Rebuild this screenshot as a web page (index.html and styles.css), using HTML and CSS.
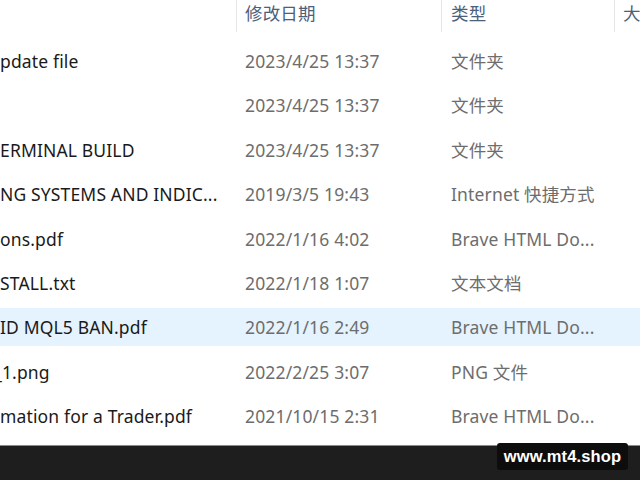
FILE: index.html
```html
<!DOCTYPE html>
<html lang="zh-CN">
<head>
  <meta charset="UTF-8" />
  <meta name="viewport" content="width=device-width, initial-scale=1" />
  <title>文件列表</title>
  <link rel="stylesheet" href="styles.css">
</head>
<body>

<div class="window">
  <!-- Column headers -->
  <div class="header">
    <div class="col name"></div>
    <div class="col date">修改日期</div>
    <div class="col type">类型</div>
    <div class="col size">大</div>
  </div>

  <!-- File rows -->
  <div class="rows">
    <div class="row">
      <div class="cell name">pdate file</div>
      <div class="cell date">2023/4/25 13:37</div>
      <div class="cell type">文件夹</div>
    </div>
    <div class="row">
      <div class="cell name"></div>
      <div class="cell date">2023/4/25 13:37</div>
      <div class="cell type">文件夹</div>
    </div>
    <div class="row">
      <div class="cell name">ERMINAL BUILD</div>
      <div class="cell date">2023/4/25 13:37</div>
      <div class="cell type">文件夹</div>
    </div>
    <div class="row">
      <div class="cell name">NG SYSTEMS AND INDIC...</div>
      <div class="cell date">2019/3/5 19:43</div>
      <div class="cell type">Internet 快捷方式</div>
    </div>
    <div class="row">
      <div class="cell name">ons.pdf</div>
      <div class="cell date">2022/1/16 4:02</div>
      <div class="cell type">Brave HTML Do...</div>
    </div>
    <div class="row">
      <div class="cell name">STALL.txt</div>
      <div class="cell date">2022/1/18 1:07</div>
      <div class="cell type">文本文档</div>
    </div>
    <div class="row hover">
      <div class="cell name">ID MQL5 BAN.pdf</div>
      <div class="cell date">2022/1/16 2:49</div>
      <div class="cell type">Brave HTML Do...</div>
    </div>
    <div class="row">
      <div class="cell name clipped">_1.png</div>
      <div class="cell date">2022/2/25 3:07</div>
      <div class="cell type">PNG 文件</div>
    </div>
    <div class="row">
      <div class="cell name">mation for a Trader.pdf</div>
      <div class="cell date">2021/10/15 2:31</div>
      <div class="cell type">Brave HTML Do...</div>
    </div>
  </div>
</div>

<div class="taskbar"></div>

<!-- Site badge over the taskbar -->
<div class="badge">www.mt4.shop</div>

</body>
</html>
```

FILE: styles.css
```css
html, body {
  margin: 0;
  height: 100%;
}
body {
  display: flex;
  flex-direction: column;
  font-family: "Noto Sans", "Noto Sans CJK SC", sans-serif;
  font-size: 17.5px;
  letter-spacing: 0.15px;
  background: #ffffff;
  color: #1a1a1a;
  overflow: hidden;
}
.window {
  flex: 1;
  background: #ffffff;
  overflow: hidden;
}
.header, .row {
  display: grid;
  grid-template-columns: 236px 205px 173px 1fr;
}
.header {
  height: 32px;
  line-height: 27px;
  color: #4c607a;
}
.header .col {
  white-space: nowrap;
  overflow: hidden;
}
.header .date, .header .type, .header .size {
  border-left: 1px solid #e5e5e5;
}
.header .date { padding-left: 8px; }
.header .type { padding-left: 9px; }
.header .size { padding-left: 8px; }

.rows {
  margin-top: 10px;
  display: flex;
  flex-direction: column;
  gap: 6.375px;
}
.row {
  height: 38px;
  line-height: 38px;
}
.row.hover {
  background: #e5f3ff;
}
.cell {
  white-space: nowrap;
  overflow: hidden;
}
.cell.name {
  color: #1a1a1a;
}
.cell.name.clipped {
  text-indent: -6px;
}
.cell.date {
  padding-left: 9px;
  color: #6d6d6d;
}
.cell.type {
  padding-left: 10px;
  color: #6d6d6d;
}
.taskbar {
  height: 34px;
  background: #1e1e1e;
  border-top: 1px solid #8a8a8a;
}
.badge {
  position: absolute;
  left: 497px;
  top: 443px;
  width: 131px;
  height: 27px;
  line-height: 27px;
  text-align: center;
  background: #0d0d0d;
  border-radius: 3px;
  color: #ffffff;
  font-family: "Liberation Sans", sans-serif;
  font-weight: bold;
  font-size: 16.5px;
}
```
